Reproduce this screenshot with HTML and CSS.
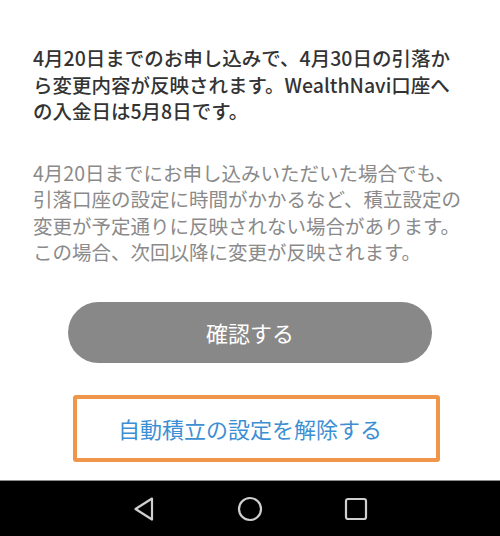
FILE: index.html
```html
<!DOCTYPE html>
<html lang="ja">
<head>
    <meta charset="UTF-8">
    <meta name="viewport" content="width=device-width, initial-scale=1.0">
    <title>自動積立の設定</title>
    <link rel="stylesheet" href="styles.css">
</head>

<body>
<div class="screen">
    <main class="content">
        <div class="notes">
            <p class="lead">4月20日までのお申し込みで、4月30日の引落から変更内容が反映されます。WealthNavi口座への入金日は5月8日です。</p>
            <p class="caution">4月20日までにお申し込みいただいた場合でも、引落口座の設定に時間がかかるなど、積立設定の変更が予定通りに反映されない場合があります。この場合、次回以降に変更が反映されます。</p>
        </div>

        <div class="actions">
            <button type="button" class="confirm">確認する</button>
            <div class="cancel-wrap">
                <a href="#" class="cancel">自動積立の設定を解除する</a>
                <span class="highlight"></span>
            </div>
        </div>
    </main>

    <nav class="navbar">
        <span class="nav-btn">
            <svg width="22" height="24" viewBox="0 0 22 24"><path d="M19 1.5 L2.5 12 L19 22.5 Z" fill="none" stroke="#cfcfcf" stroke-width="2.2" stroke-linejoin="round"/></svg>
        </span>
        <span class="nav-btn">
            <svg width="26" height="26" viewBox="0 0 26 26"><circle cx="13" cy="13" r="11" fill="none" stroke="#cfcfcf" stroke-width="2.2"/></svg>
        </span>
        <span class="nav-btn">
            <svg width="24" height="24" viewBox="0 0 24 24"><rect x="2" y="2" width="20" height="20" rx="2" fill="none" stroke="#cfcfcf" stroke-width="2.2"/></svg>
        </span>
    </nav>
</div>
</body>
</html>
```

FILE: styles.css
```css
body {
    margin: 0;
    background-color: #fff;
    font-family: "Noto Sans CJK JP", "Noto Sans", sans-serif;
}

.screen {
    display: flex;
    flex-direction: column;
    height: 536px;
}

.content {
    flex: 1;
}

.notes {
    padding: 45px 35px 0 33px;
}

.notes p {
    margin: 0;
    font-size: 19.5px;
    line-height: 26.5px;
}

.lead {
    color: #333;
    font-weight: 500;
}

.caution {
    margin-top: 35px !important;
    color: #8a8a8a;
}

.actions {
    display: flex;
    flex-direction: column;
    align-items: center;
    margin-top: 36px;
}

.confirm {
    width: 364px;
    height: 61px;
    border: none;
    border-radius: 31px;
    background-color: #888;
    color: #fff;
    font-family: inherit;
    font-size: 22px;
    cursor: pointer;
}

.cancel-wrap {
    position: relative;
    align-self: stretch;
    display: flex;
    justify-content: center;
    align-items: center;
    height: 67px;
    margin-top: 32px;
}

.cancel {
    color: #3d8fd3;
    font-size: 22px;
    text-decoration: none;
}

.highlight {
    position: absolute;
    top: 0;
    left: 73px;
    width: 359px;
    height: 59px;
    border: 4px solid #f0964a;
    border-radius: 3px;
    pointer-events: none;
}

.navbar {
    display: flex;
    justify-content: center;
    align-items: center;
    height: 55px;
    background-color: #000;
    border-top: 1px solid #8c8c8c;
}

.nav-btn {
    display: flex;
    justify-content: center;
    width: 106px;
}
```
